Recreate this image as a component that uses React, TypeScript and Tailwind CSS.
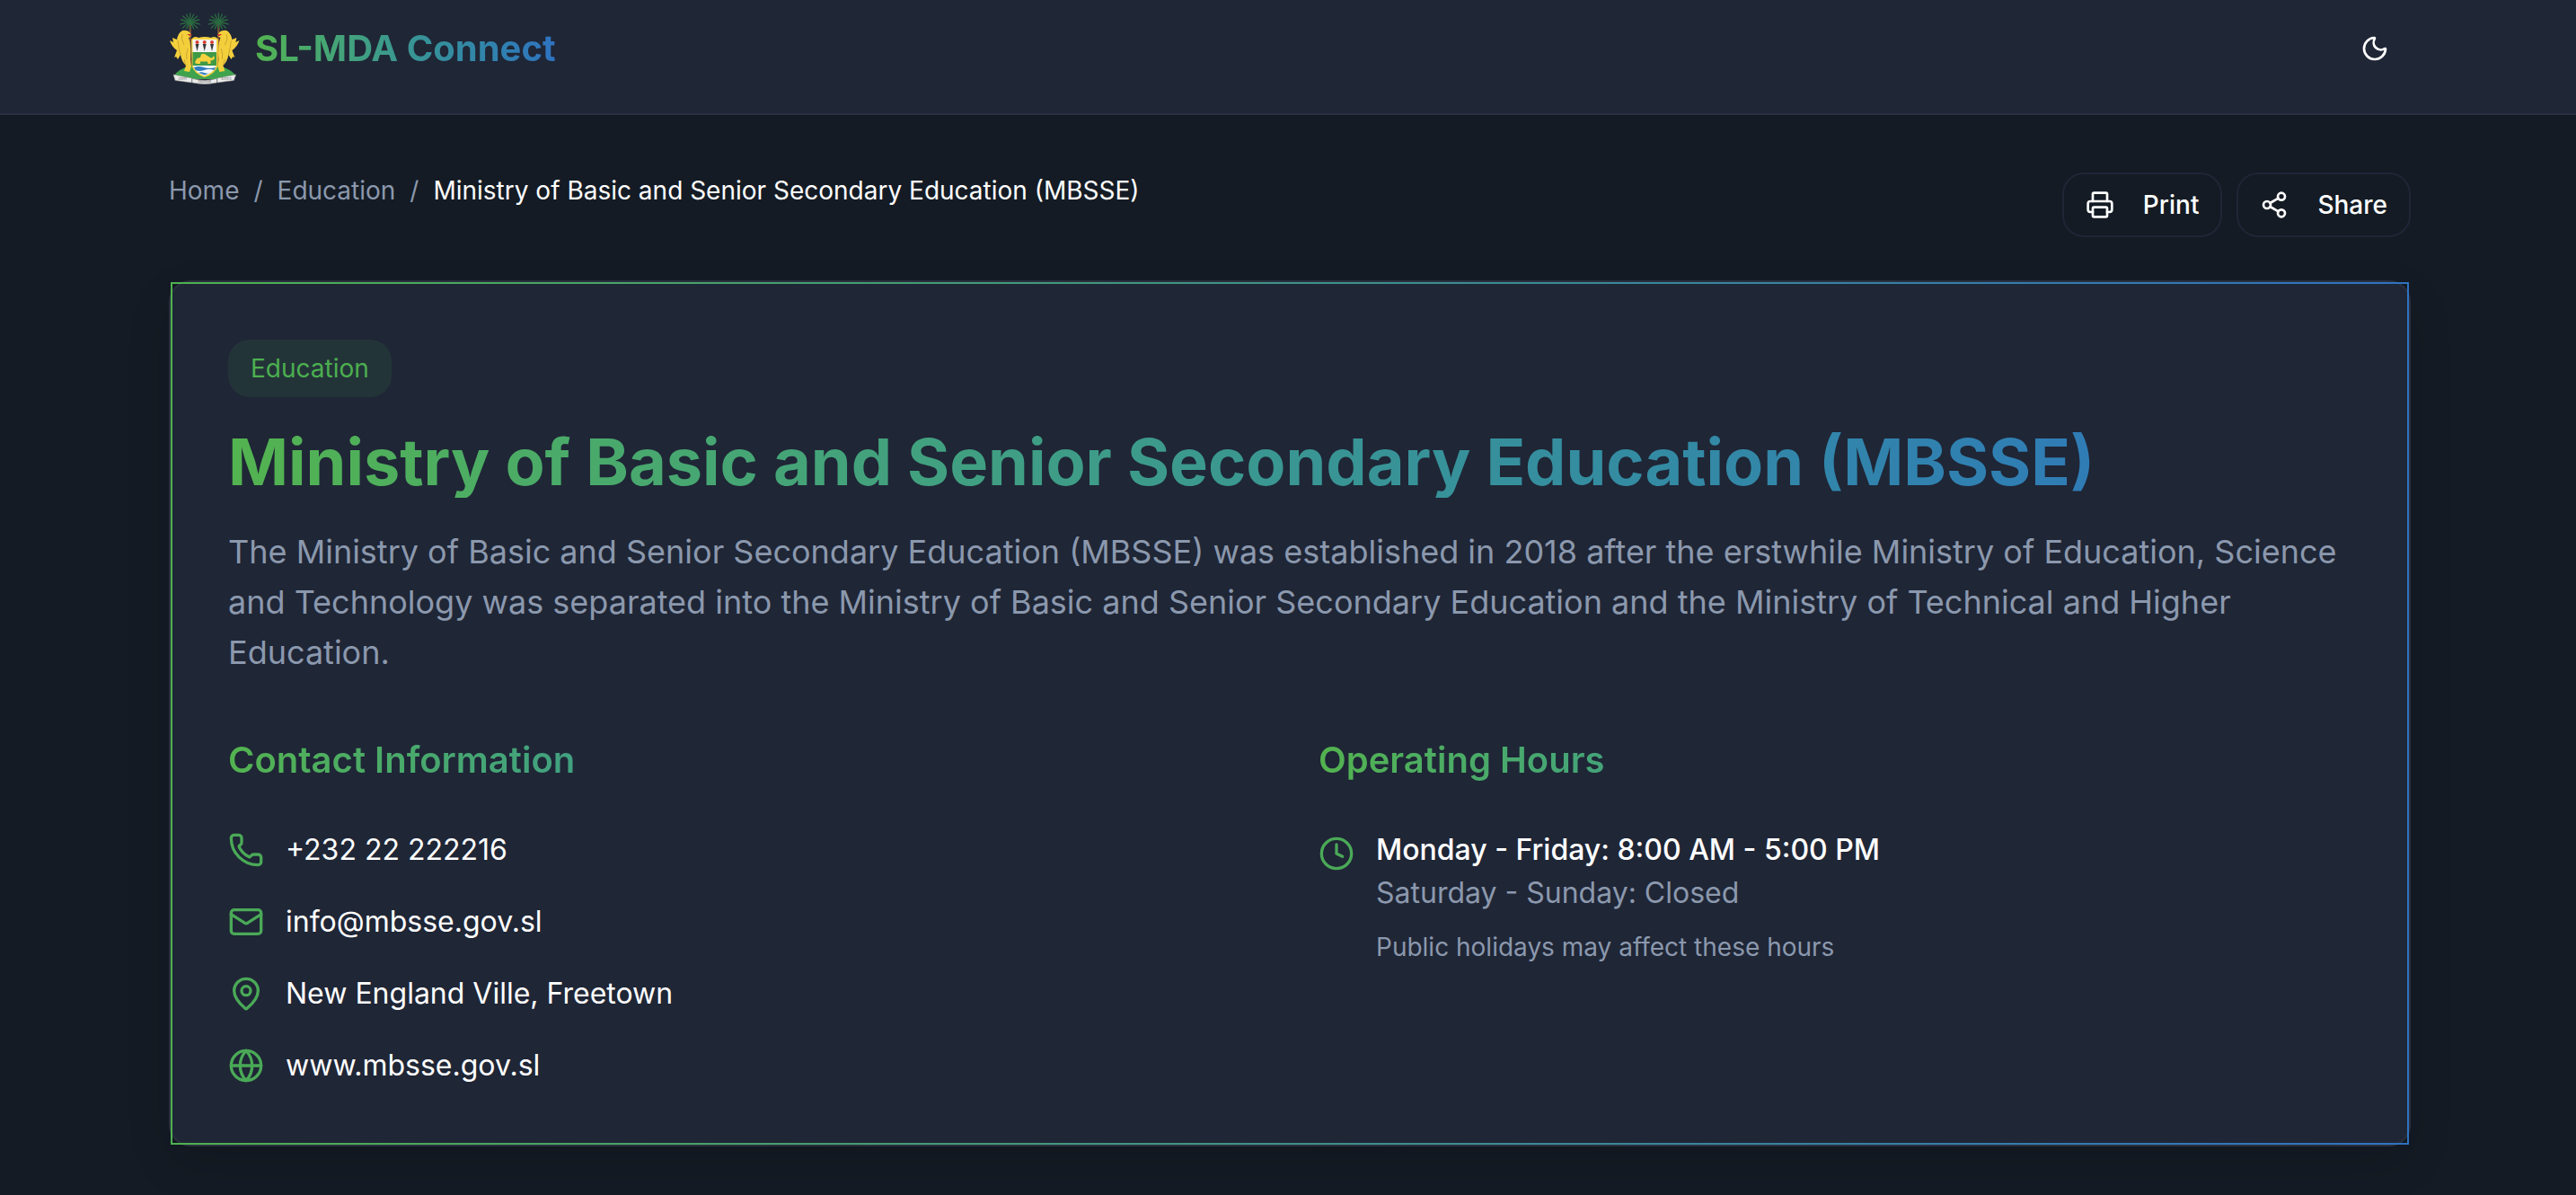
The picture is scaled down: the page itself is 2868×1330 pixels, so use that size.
import { Clock, Globe, Mail, MapPin, Moon, Phone, Printer, Share2 } from "lucide-react";

function Palm({ x }: { x: number }) {
  // fronds fan out from the crown of the trunk
  const tips = [
    [-11, 13], [-10, 8], [-8, 4], [-4, 2], [0, 1], [4, 2], [8, 4], [10, 8], [11, 13],
    [-8, 17], [-4, 18], [0, 18], [4, 18], [8, 17],
  ];
  return (
    <g>
      <path d={`M${x - 1.1} 12 H${x + 1.1} L${x + 0.9} 60 H${x - 0.9} Z`} fill="#8a5433" />
      {tips.map(([dx, y], i) => (
        <path
          key={i}
          d={`M${x} 11 Q${x + dx * 0.6} ${(y + 11) / 2 - 1} ${x + dx} ${y}`}
          stroke="#2a6c40"
          strokeWidth="1.3"
          fill="none"
          strokeLinecap="round"
        />
      ))}
    </g>
  );
}

function Lion() {
  return (
    <g>
      <path
        d="M15 20 Q21 19 24 23 L25 26 L22 28 L23.5 33 Q25 42 24 52 L25 60 L23 66 L17 65 L19 59 Q14 54 13 47 L10 52 L8 49 L6 50 L9 42 Q3 38 1 31 L5 33 L4 28 L9 30 Q10 23 15 20 Z"
        fill="#f3cf3c"
      />
      <path
        d="M10 31 Q11 40 13 47 M19 59 L17 52 M15 24 Q13 30 17 36 M21 40 Q19 46 20 52"
        stroke="#b08a26"
        strokeWidth="0.6"
        fill="none"
      />
      <path d="M20 24 L25.5 24 L24 26.5 Z" fill="#c8382c" />
    </g>
  );
}

function CoatOfArms() {
  return (
    <svg viewBox="0 0 80 80" className="h-20 w-20 shrink-0">
      <Palm x={23.7} />
      <Palm x={55.3} />
      {/* green ground */}
      <path d="M5 71 Q10 63 24 59 L56 59 Q70 63 75 71 L62 74 L18 74 Z" fill="#3fa34d" />
      {/* shield */}
      <path d="M25 30 Q28 25 33 28 Q40 26 47 28 Q52 25 55 30 L54.5 59 Q52 68 39.7 72 Q28 68 25.5 59 Z" fill="#f6d23f" />
      <path d="M26.5 30 H53 V44 H26.5 Z" fill="#f4f4f4" />
      <path d="M26.5 44 H53 V59 H26.5 Z" fill="#3f9a45" />
      <path d="M27 59 H52.5 Q50 67 39.7 70.5 Q29.5 67 27 59 Z" fill="#f4f8fb" />
      <path d="M28 61 Q33 59 39 61 T52 61 L50.5 64 Q45 62 39.5 64 T29.5 64 Z" fill="#2f7cc0" />
      <path d="M33 67 Q36 65.5 39.5 67 T46 67 L40 69.5 Z" fill="#2f7cc0" />
      {/* torches */}
      <g fill="#3a3a3a">
        <path d="M29.5 35 H33.5 L31.5 43 Z" />
        <path d="M37.7 35 H41.7 L39.7 43 Z" />
        <path d="M46 35 H50 L48 43 Z" />
      </g>
      <g fill="#d8402f">
        <circle cx="31.5" cy="33" r="2" />
        <circle cx="39.7" cy="33" r="2" />
        <circle cx="48" cy="33" r="2" />
      </g>
      {/* shield lion */}
      <path d="M29 56 Q30 50 35 50 L36 46.5 Q39 44.5 42 47.5 L46 50 Q48 52 50 48 L51 51 Q49 54 46.5 53 L46.5 57 L43.5 57 L43 54.5 L35 54.5 L35 57 L31 57 Z" fill="#f6d23f" />
      {/* supporters */}
      <Lion />
      <g transform="translate(79.4 0) scale(-1 1)">
        <Lion />
      </g>
      {/* motto scroll */}
      <path d="M5 69 L25.5 73 L25.5 78 L7 75.5 Z" fill="#ececec" stroke="#8d8d8d" strokeWidth="0.5" />
      <path d="M26 73.5 Q40 77 53.5 73.5 L53.5 78 Q40 81 26 78 Z" fill="#ececec" stroke="#8d8d8d" strokeWidth="0.5" />
      <path d="M54 73 L74.5 69 L72.5 75.5 L54 78 Z" fill="#ececec" stroke="#8d8d8d" strokeWidth="0.5" />
      <g fontSize="3" fill="#555" fontFamily="Liberation Serif, serif" textAnchor="middle">
        <text x="15.5" y="74.5">UNITY</text>
        <text x="39.7" y="78.2">FREEDOM</text>
        <text x="64" y="74.5">JUSTICE</text>
      </g>
    </svg>
  );
}

const contacts = [
  { icon: Phone, text: "+232 22 222216" },
  { icon: Mail, text: "info@mbsse.gov.sl" },
  { icon: MapPin, text: "New England Ville, Freetown" },
  { icon: Globe, text: "www.mbsse.gov.sl" },
];

const gradientText =
  "bg-gradient-to-r from-[#53b34f] to-[#2f72c0] bg-clip-text text-transparent";

export default function App() {
  return (
    <div className="min-h-[1330px] overflow-hidden bg-[#141b24] font-['Inter',sans-serif] text-white">
      <header className="h-[128px] border-b-2 border-[#2a303e] bg-[#1f2636]">
        <div className="ml-[188px] flex h-[108px] w-[2496px] items-center justify-between">
          <div className="flex items-center gap-4">
            <CoatOfArms />
            <span className={`text-[40px] leading-[56px] font-bold ${gradientText}`}>SL-MDA Connect</span>
          </div>
          <button className="p-6">
            <Moon className="h-8 w-8" strokeWidth={2} />
          </button>
        </div>
      </header>

      <main className="ml-[188px] w-[2496px] pt-16">
        <div className="flex items-start justify-between">
          <nav className="flex items-center gap-4 text-[28px] leading-10 text-[#8b98ad]">
            <span>Home</span>
            <span>/</span>
            <span>Education</span>
            <span>/</span>
            <span className="text-white">Ministry of Basic and Senior Secondary Education (MBSSE)</span>
          </nav>
          <div className="flex gap-4">
            <button className="flex h-[72px] items-center gap-8 rounded-3xl border-2 border-[#1f2636] px-6 text-[28px] font-medium">
              <Printer className="h-8 w-8" />
              Print
            </button>
            <button className="flex h-[72px] items-center gap-8 rounded-3xl border-2 border-[#1f2636] px-6 text-[28px] font-medium">
              <Share2 className="h-8 w-8" />
              Share
            </button>
          </div>
        </div>

        <section className="relative mt-12 rounded-3xl border-2 border-[#2a303e] bg-[#1f2636] p-16 shadow-[0_20px_50px_rgba(0,0,0,0.12)]">
          {/* gradient frame sits over the card's own rounded border */}
          <div className="absolute inset-0 border-2 [border-image:linear-gradient(90deg,#4fb050,#2f72c0)_1]" />
          <span className="inline-block rounded-3xl bg-[#4caf50]/10 px-[25px] py-3 text-[28px] leading-10 text-[#4caf50]">Education</span>
          <h1 className={`mt-8 text-[72px] leading-[80px] font-bold ${gradientText}`}>
            Ministry of Basic and Senior Secondary Education (MBSSE)
          </h1>
          <p className="mt-8 text-[36px] leading-[56px] text-[#8b98ad]">
            The Ministry of Basic and Senior Secondary Education (MBSSE) was established in 2018 after the erstwhile Ministry of Education, Science and Technology was separated into the Ministry of Basic and Senior Secondary Education and the Ministry of Technical and Higher Education.
          </p>

          <div className="mt-16 grid grid-cols-2 gap-16">
            <div>
              <h2 className={`text-[40px] leading-[56px] font-semibold ${gradientText}`}>Contact Information</h2>
              <ul className="mt-12 flex flex-col gap-8">
                {contacts.map((c) => (
                  <li key={c.text} className="flex items-center gap-6 text-[32px] leading-12">
                    <c.icon className="h-10 w-10 text-[#4aa957]" />
                    {c.text}
                  </li>
                ))}
              </ul>
            </div>
            <div>
              <h2 className={`text-[40px] leading-[56px] font-semibold ${gradientText}`}>Operating Hours</h2>
              <div className="mt-12 flex gap-6">
                <Clock className="mt-2 h-10 w-10 text-[#4aa957]" />
                <div>
                  <p className="text-[32px] leading-12 font-medium">Monday - Friday: 8:00 AM - 5:00 PM</p>
                  <p className="text-[32px] leading-12 text-[#8b98ad]">Saturday - Sunday: Closed</p>
                  <p className="mt-4 text-[28px] leading-10 text-[#8b98ad]">Public holidays may affect these hours</p>
                </div>
              </div>
            </div>
          </div>
        </section>
      </main>
    </div>
  );
}
